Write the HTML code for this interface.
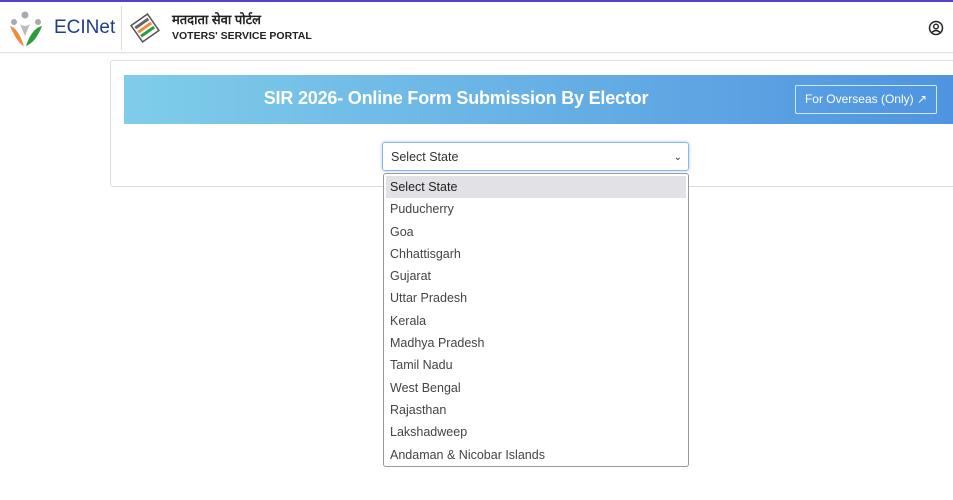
<!DOCTYPE html>
<html><head><style>
body{margin:0;width:953px;height:500px;overflow:hidden;background:#fff;font-family:"Liberation Sans",sans-serif;position:relative}
.top{position:absolute;left:0;top:0;width:953px;height:2px;background:#5b3fc4}
.hdr{position:absolute;left:0;top:2px;width:953px;height:50px;background:#fff;border-bottom:1px solid #e3e3e3;box-shadow:0 1px 3px rgba(0,0,0,.06)}
.card{position:absolute;left:110px;top:60px;width:860px;height:125px;border:1px solid #ddd;border-radius:3px;background:#fff}
.banner{position:absolute;left:124px;top:75px;width:829px;height:49px;background:linear-gradient(90deg,#7fcdea,#4f94e0)}
.banner h1{margin:0;position:absolute;left:0;width:664px;top:13px;text-align:center;color:#fff;font-size:18px;font-weight:bold;letter-spacing:-0.2px}
.btn{position:absolute;left:671px;top:10px;width:140px;height:27px;border:1px solid #d4e6fb;border-radius:2px;color:#fff;font-size:12px;line-height:27px;text-align:center}
.sel{position:absolute;left:382px;top:142px;width:307px;height:29px;border:1px solid #8bb7ec;border-radius:3px;box-shadow:0 0 3px rgba(80,140,230,.5);font-size:12.5px;color:#333;line-height:29px;padding-left:8px;box-sizing:border-box}
.dd{position:absolute;left:383px;top:173px;width:306px;height:294px;border:1px solid #999;border-radius:3px;background:#fff;box-sizing:border-box}
.dd div{height:22.3px;line-height:22px;font-size:12.5px;color:#444;padding-left:6px}
.dd .a{background:#e1e1e6;margin:2px 2px 0;padding-left:4px;color:#222}
</style></head><body>
<div class="top"></div>
<div class="hdr">
<svg style="position:absolute;left:6px;top:8px" width="40" height="38" viewBox="0 0 40 38">
<circle cx="19" cy="5" r="3.5" fill="#aaa"/><circle cx="8" cy="12" r="3" fill="#aaa"/><circle cx="32" cy="12" r="3" fill="#aaa"/>
<path d="M4 16 Q12 18 18 36 Q12 34 4 16Z" fill="#f08a3c"/><path d="M36 16 Q26 18 20 36 Q30 32 36 16Z" fill="#2e9b3f"/><path d="M14 14 Q19 18 24 14 L19 26Z" fill="#bbb"/></svg>
<div style="position:absolute;left:54px;top:15px;font-size:19px;color:#1f3d8a">ECINet</div>
<div style="position:absolute;left:121px;top:4px;width:1px;height:44px;background:#ddd"></div>
<svg style="position:absolute;left:129px;top:10px" width="32" height="32" viewBox="0 0 32 32"><g transform="rotate(-35 16 16)"><rect x="6" y="6" width="20" height="20" fill="none" stroke="#555" stroke-width="1.5"/><rect x="8" y="9" width="16" height="3" fill="#666"/><rect x="8" y="14" width="16" height="3" fill="#f08a3c"/><rect x="8" y="19" width="16" height="3" fill="#2e9b3f"/></g></svg>
<div style="position:absolute;left:172px;top:8px;font-size:13px;font-weight:bold;color:#222;font-family:'Liberation Sans','Noto Sans CJK SC',sans-serif">मतदाता सेवा पोर्टल</div>
<div style="position:absolute;left:172px;top:28px;font-size:10.5px;font-weight:bold;color:#222">VOTERS' SERVICE PORTAL</div>
<svg style="position:absolute;left:928px;top:18px" width="16" height="16" viewBox="0 0 16 16"><circle cx="8" cy="8" r="6.5" fill="none" stroke="#222" stroke-width="1.5"/><circle cx="8" cy="6.5" r="2.3" fill="none" stroke="#222" stroke-width="1.4"/><path d="M3.8 12.5 Q8 8.5 12.2 12.5" fill="none" stroke="#222" stroke-width="1.4"/></svg>
</div>
<div class="card"></div>
<div class="banner"><h1>SIR 2026- Online Form Submission By Elector</h1><div class="btn">For Overseas (Only) &#8599;</div></div>
<div class="sel">Select State<span style="position:absolute;right:6px;top:0;font-size:10px">&#8964;</span></div>
<div class="dd">
<div class="a">Select State</div><div>Puducherry</div><div>Goa</div><div>Chhattisgarh</div><div>Gujarat</div><div>Uttar Pradesh</div><div>Kerala</div><div>Madhya Pradesh</div><div>Tamil Nadu</div><div>West Bengal</div><div>Rajasthan</div><div>Lakshadweep</div><div>Andaman &amp; Nicobar Islands</div>
</div>
</body></html>
